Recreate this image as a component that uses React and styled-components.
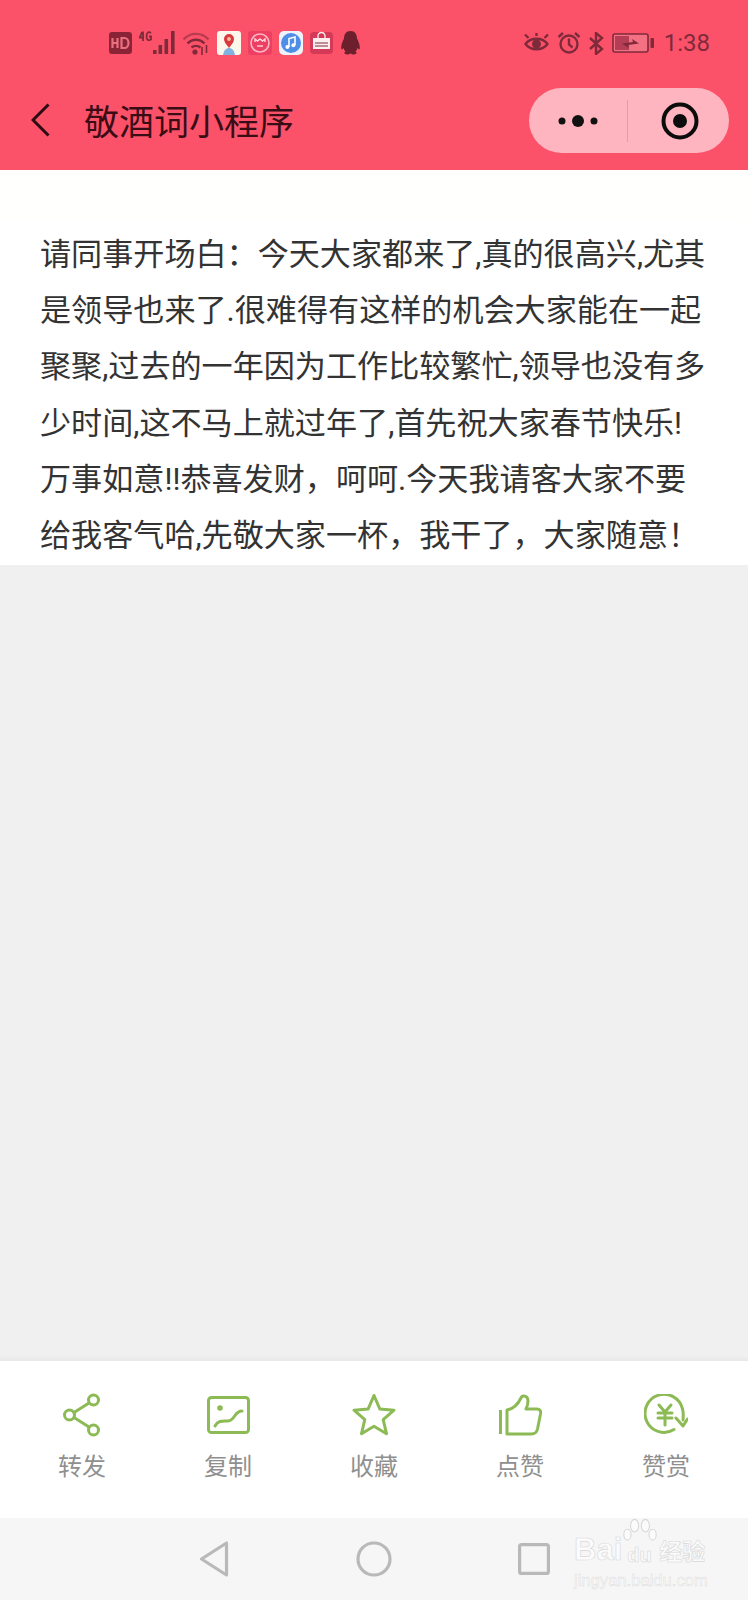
import React from "react";
import styled, { createGlobalStyle } from "styled-components";

const Global = createGlobalStyle`
  html, body { margin: 0; padding: 0; background: #f0f0f0; }
  * { box-sizing: border-box; }
`;
const CJK = `Roboto, "Noto Sans CJK SC", sans-serif`;

const Page = styled.div`
  width: 748px; height: 1600px; display: flex; flex-direction: column;
  background: #f0f0f0; font-family: ${CJK}; overflow: hidden;
`;
const Header = styled.header`
  height: 170px; flex: none; background: #fb5269; display: flex; flex-direction: column;
`;
const StatusBar = styled.div`
  height: 88px; flex: none; display: flex; align-items: flex-start; justify-content: space-between;
  padding: 31px 38px 0 109px;
`;
const StatusGroup = styled.div`
  display: flex; align-items: center; height: 24px; gap: ${p => p.$gap}px;
`;
const Clock = styled.span`
  font: 24px/24px Roboto, sans-serif; color: #7f2a3a; margin-left: 2px;
`;
const NavBar = styled.div`
  flex: 1; display: flex; align-items: flex-start; padding: 0 19px 0 31px;
`;
const BackBtn = styled.div`
  width: 19px; height: 34px; margin-top: 15px; flex: none; display: flex;
`;
const Title = styled.h1`
  margin: 15px 0 0 34px; font: 400 35px/42px ${CJK}; color: #3a0c16; flex: 1; white-space: nowrap;
`;
const Capsule = styled.div`
  width: 200px; height: 65px; border-radius: 33px; background: #ffb5bf; display: flex; align-items: center;
`;
const CapsulePart = styled.div`
  flex: ${p => p.$w}; height: 100%; display: flex; align-items: center; justify-content: center;
  padding-left: ${p => p.$shift || 0}px;
`;
const CapsuleRule = styled.div`
  width: 1px; height: 42px; background: #eb99a4; flex: none;
`;
const Article = styled.main`
  height: 395px; flex: none; padding: 57px 0 0 40px;
  background: linear-gradient(#fffffd 0, #fffffd 44px, #ffffff 52px);
`;
const Line = styled.div`
  font-size: 31.1px; line-height: 56.2px; height: 56.2px; color: #333; white-space: nowrap;
`;
const Spacer = styled.div`
  flex: 1; background: linear-gradient(#f0f0f0 0, #f0f0f0 calc(100% - 6px), #e8e8e8 100%);
`;
const TabBar = styled.nav`
  height: 157px; flex: none; background: #fff; display: grid; grid-template-columns: repeat(5, 1fr);
  padding: 30px 9px 0;
`;
const Tab = styled.div`
  display: flex; flex-direction: column; align-items: center;
`;
const TabIcon = styled.div`
  height: 48px; display: flex; align-items: center; justify-content: center;
`;
const TabLabel = styled.span`
  margin-top: 14px; font-size: 24px; line-height: 28px; color: #8f8f8f;
`;
const SystemNav = styled.div`
  height: 82px; flex: none; background: #f6f6f6; position: relative; display: flex; align-items: flex-start;
  justify-content: center; padding: 22px 0 0 0;
`;
const NavSlot = styled.div`
  width: 160px; display: flex; justify-content: center; height: 38px; align-items: center;
`;
const Watermark = styled.div`
  position: absolute; left: 574px; top: 0; width: 140px; color: #fbfbfb;
  font-family: "Liberation Sans", sans-serif; -webkit-text-stroke: 0.6px #d8d8d8;
`;
const WmTop = styled.div`
  display: flex; align-items: center; height: 46px; padding-top: 18px; font-size: 31px; font-weight: 700; line-height: 30px;
`;
const WmCn = styled.span`
  font: 700 23px/24px "Noto Sans CJK SC", sans-serif; margin-left: 1px; white-space: nowrap;
`;
const WmSub = styled.div`
  margin-top: 8px; font-size: 16.6px; line-height: 18px; white-space: nowrap; -webkit-text-stroke: 0.4px #d8d8d8;
`;
const PawWrap = styled.div`
  width: 36px; height: 48px; position: relative; flex: none; margin: -18px 0 0 0;
`;
const PawLabel = styled.span`
  position: absolute; left: 5px; top: 28px; font-size: 20px; line-height: 20px; font-weight: 700;
`;
const AppTile = styled.svg`
  flex: none; display: block;
`;

const green = "#8cbb55";
const dark = "#7f2a3a";

const Hd = () => (
  <AppTile width="23" height="22" viewBox="0 0 23 22">
    <rect width="23" height="22" rx="3" fill="#8b2336" />
    <path d="M3.500 6v10M3.500 11h5M8.500 6v10M12.500 6v10h3a4 5 0 0 0 0-10z" fill="none" stroke="#e9707f" strokeWidth="2.200" />
  </AppTile>
);
const Signal = () => (
  <AppTile width="37" height="24" viewBox="0 0 37 24">
    <path d="M3 1 .8 6.500H5M4 .5V10M12 2c-2.500-2-4.500 0-4.500 3.500S9.500 10 12 8.500V5.500H10" fill="none" stroke={dark} strokeWidth="1.800" />
    <g fill={dark}>
      <rect x="14" y="19" width="3.600" height="4" />
      <rect x="19.500" y="14" width="3.600" height="9" />
      <rect x="25.500" y="8" width="3.600" height="15" />
      <rect x="32" y="0" width="3.600" height="23" />
    </g>
  </AppTile>
);
const Wifi = () => (
  <AppTile width="27" height="23" viewBox="0 0 27 23">
    <g fill="none" stroke={dark} strokeWidth="2.400">
      <path d="M0.500 7.500C7-0 19-0 25.500 7.500" opacity=".55" />
      <path d="M4.500 11.500c5-5 12-5 17 0" />
      <path d="M8.500 15.500c2.500-2.200 6.500-2.200 9 0" />
    </g>
    <circle cx="12" cy="20" r="2.600" fill={dark} />
    <path d="M19 15v8M23.500 13v8" stroke={dark} strokeWidth="1.600" />
  </AppTile>
);
const MapApp = () => (
  <AppTile width="24" height="24" viewBox="0 0 24 24">
    <rect width="24" height="24" rx="3" fill="#fdf6ea" />
    <path d="M6 24c1-5 3-7 6-7s5 2 6 7z" fill="#7fb2e0" />
    <path d="M12 17c-3-4-5-6-5-9a5 5 0 0 1 10 0c0 3-2 5-5 9z" fill="#d83a3d" />
    <circle cx="12" cy="8" r="2" fill="#f4b9a0" />
  </AppTile>
);
const PinkApp = () => (
  <AppTile width="24" height="24" viewBox="0 0 24 24">
    <rect width="24" height="24" rx="3" fill="#ec3f62" />
    <circle cx="12" cy="12" r="9" fill="none" stroke="#ffb7c3" strokeWidth="1.600" />
    <path d="M7 11V8l2.500 2L12 8l2.500 2L17 8v3" fill="none" stroke="#ffd6dc" strokeWidth="1.400" />
    <path d="M9 15h6" stroke="#ffd6dc" strokeWidth="1.400" />
  </AppTile>
);
const MusicApp = () => (
  <AppTile width="24" height="24" viewBox="0 0 24 24">
    <rect width="24" height="24" rx="5" fill="#eef2fb" />
    <circle cx="12" cy="12" r="10" fill="#4f8ee6" />
    <path d="M10 16V7.500l6-1.500v8" fill="none" stroke="#fff" strokeWidth="1.600" />
    <circle cx="8.400" cy="16" r="2" fill="#fff" />
    <circle cx="14.400" cy="14.200" r="2" fill="#fff" />
  </AppTile>
);
const TmallApp = () => (
  <AppTile width="23" height="24" viewBox="0 0 23 24">
    <rect y="1" width="23" height="22" rx="4" fill="#d43a58" />
    <rect x="3" y="7" width="17" height="11" fill="#fdeef0" />
    <path d="M8 7V5a3.500 3.500 0 0 1 7 0v2" fill="none" stroke="#fdeef0" strokeWidth="1.300" />
    <path d="M5 12h13M5 15h13" stroke="#7f2a3a" strokeWidth="1.200" />
  </AppTile>
);
const Qq = () => (
  <AppTile width="21" height="24" viewBox="0 0 21 24">
    <path d="M10.500 0C6 0 4 3.500 4 7.500 2.500 10.500 1 14 1.200 17c.2 2 1.300 1.500 2.300 0 .4 1.500 1 2.700 2 3.600C3.800 21.500 4 23.500 7 23.500c1.500 0 2.700-.5 3.500-1 .8.500 2 1 3.500 1 3 0 3.200-2 1.500-2.900 1-.9 1.600-2.100 2-3.600 1 1.500 2.100 2 2.300 0 .2-3-1.300-6.500-2.800-9.500C17 3.500 15 0 10.500 0z" fill="#6d1f2e" />
  </AppTile>
);
const Eye = () => (
  <AppTile width="25" height="20" viewBox="0 0 25 20">
    <g fill="none" stroke={dark} strokeWidth="2.400">
      <path d="M1.500 11c5-7 17-7 22 0-5 7-17 7-22 0z" />
      <path d="M1 1.500 4.500 5M24 1.500 20.500 5M12.500 0v3" />
    </g>
    <circle cx="12.500" cy="11" r="4.500" fill={dark} />
  </AppTile>
);
const Alarm = () => (
  <AppTile width="24" height="22" viewBox="0 0 24 22">
    <g fill="none" stroke={dark} strokeWidth="2.400">
      <circle cx="12" cy="12" r="8.500" />
      <path d="M12 6.500V12.500l3.500 3M1.500 5 6 1M22.500 5 18 1" />
    </g>
  </AppTile>
);
const Bluetooth = () => (
  <AppTile width="15" height="23" viewBox="0 0 15 23">
    <path d="M1 6l12 11-6 5V1l6 5L1 17" fill="none" stroke={dark} strokeWidth="2.400" />
  </AppTile>
);
const Battery = () => (
  <AppTile width="42" height="20" viewBox="0 0 42 20">
    <rect x="1" y="1" width="35" height="18" rx="2" fill="#f47183" stroke={dark} strokeWidth="1.600" />
    <rect x="3" y="3" width="14" height="14" fill="#b33e55" />
    <path d="M10 10.500 21 9l-1-3 7 4.500-11 1.500 1 3z" fill={dark} />
    <rect x="38.500" y="5" width="3.500" height="10" rx="1" fill={dark} />
  </AppTile>
);
const Chevron = () => (
  <svg width="19" height="34" viewBox="0 0 19 34">
    <path d="M17.500 1.500 2 17l15.500 15.500" fill="none" stroke="#2a0b12" strokeWidth="3" />
  </svg>
);
const Dots = () => (
  <svg width="40" height="14" viewBox="0 0 40 14">
    <circle cx="4" cy="7" r="3.500" fill="#111" />
    <circle cx="20" cy="7" r="6" fill="#111" />
    <circle cx="36" cy="7" r="3.500" fill="#111" />
  </svg>
);
const Target = () => (
  <svg width="38" height="38" viewBox="0 0 38 38">
    <circle cx="19" cy="19" r="16.500" fill="none" stroke="#0c0c0c" strokeWidth="4" />
    <circle cx="19" cy="19" r="7" fill="#0c0c0c" />
  </svg>
);

const Stroke = styled.g`
  fill: none; stroke: ${green}; stroke-width: 3; stroke-linejoin: round; stroke-linecap: round;
`;
const ShareIcon = () => (
  <svg width="38" height="44" viewBox="0 0 38 44"><Stroke>
    <circle cx="30.500" cy="7" r="5" /><circle cx="6.500" cy="22" r="5" /><circle cx="30.500" cy="37" r="5" />
    <path d="M11 19.500 26 10M11 24.500 26 34" />
  </Stroke></svg>
);
const ChartIcon = () => (
  <svg width="43" height="38" viewBox="0 0 43 38"><Stroke>
    <rect x="1.500" y="1.500" width="40" height="35" rx="3" />
    <path d="M8 30c3-6 8-5 13-5 7 0 6-10 14-10" />
  </Stroke><circle cx="13" cy="12" r="2.800" fill={green} /></svg>
);
const StarIcon = () => (
  <svg width="44" height="44" viewBox="0 0 44 44"><Stroke>
    <path d="M22 2.500l5.800 13.400 14.200 1.300-10.800 9.500 3.300 14-12.500-7.500-12.500 7.500 3.300-14L2 17.200l14.200-1.300z" />
  </Stroke></svg>
);
const LikeIcon = () => (
  <svg width="44" height="42" viewBox="0 0 44 42"><Stroke>
    <path d="M2.500 16v24" strokeLinecap="butt" />
    <path d="M9 40V16c6-1 11-6 14-12 1-3 7-3 7 3 0 4-1 6-2 8h11c3 0 4 2 3.500 5l-3 15c-.7 3-2.500 5-6 5z" />
  </Stroke></svg>
);
const CoinIcon = () => (
  <svg width="44" height="42" viewBox="0 0 44 42"><Stroke>
    <path d="M30 35.500A19 19 0 1 1 38.500 15c1 3 1 6 .5 11" />
    <path d="M32 24l7 8 4.500-7" />
    <path d="M15 11l6 7 6-7M14 19h14M14 24h14M21 18v13" />
  </Stroke></svg>
);

const NavBack = () => (
  <svg width="30" height="36" viewBox="0 0 30 36">
    <path d="M27.500 2v32L2.500 18z" fill="none" stroke="#b9b9b9" strokeWidth="3.200" strokeLinejoin="round" />
  </svg>
);
const NavHome = () => (
  <svg width="36" height="36" viewBox="0 0 36 36">
    <circle cx="18" cy="18" r="16" fill="none" stroke="#b9b9b9" strokeWidth="3.200" />
  </svg>
);
const NavRecent = () => (
  <svg width="32" height="32" viewBox="0 0 32 32">
    <rect x="1.600" y="1.600" width="28.800" height="28.800" rx="2" fill="none" stroke="#b9b9b9" strokeWidth="3.200" />
  </svg>
);
const Paw = () => (
  <svg width="36" height="30" viewBox="0 0 40 30">
    <g fill="#fbfbfb" stroke="#d8d8d8" strokeWidth="1.200">
      <ellipse cx="14" cy="8" rx="4.500" ry="7" />
      <ellipse cx="26" cy="8" rx="4.500" ry="7" />
      <ellipse cx="6" cy="18" rx="4" ry="6" />
      <ellipse cx="34" cy="18" rx="4" ry="6" />
    </g>
  </svg>
);

const lines = [
  "请同事开场白：今天大家都来了,真的很高兴,尤其",
  "是领导也来了.很难得有这样的机会大家能在一起",
  "聚聚,过去的一年因为工作比较繁忙,领导也没有多",
  "少时间,这不马上就过年了,首先祝大家春节快乐!",
  "万事如意!!恭喜发财，呵呵.今天我请客大家不要",
  "给我客气哈,先敬大家一杯，我干了，大家随意！",
];
const tabs = [
  ["转发", ShareIcon], ["复制", ChartIcon], ["收藏", StarIcon], ["点赞", LikeIcon], ["赞赏", CoinIcon],
];

export default function App() {
  return (
    <Page>
      <Global />
      <Header>
        <StatusBar>
          <StatusGroup $gap={7}>
            <Hd /><Signal /><Wifi /><MapApp /><PinkApp /><MusicApp /><TmallApp /><Qq />
          </StatusGroup>
          <StatusGroup $gap={8}>
            <Eye /><Alarm /><Bluetooth /><Battery /><Clock>1:38</Clock>
          </StatusGroup>
        </StatusBar>
        <NavBar>
          <BackBtn><Chevron /></BackBtn>
          <Title>敬酒词小程序</Title>
          <Capsule>
            <CapsulePart $w={99}><Dots /></CapsulePart>
            <CapsuleRule />
            <CapsulePart $w={100} $shift={3}><Target /></CapsulePart>
          </Capsule>
        </NavBar>
      </Header>
      <Article>
        {lines.map(t => <Line key={t}>{t}</Line>)}
      </Article>
      <Spacer />
      <TabBar>
        {tabs.map(([label, Icon]) => (
          <Tab key={label}>
            <TabIcon><Icon /></TabIcon>
            <TabLabel>{label}</TabLabel>
          </Tab>
        ))}
      </TabBar>
      <SystemNav>
        <NavSlot><NavBack /></NavSlot>
        <NavSlot><NavHome /></NavSlot>
        <NavSlot><NavRecent /></NavSlot>
        <Watermark>
          <WmTop>
            Bai
            <PawWrap><Paw /><PawLabel>du</PawLabel></PawWrap>
            <WmCn>经验</WmCn>
          </WmTop>
          <WmSub>jingyan.baidu.com</WmSub>
        </Watermark>
      </SystemNav>
    </Page>
  );
}
